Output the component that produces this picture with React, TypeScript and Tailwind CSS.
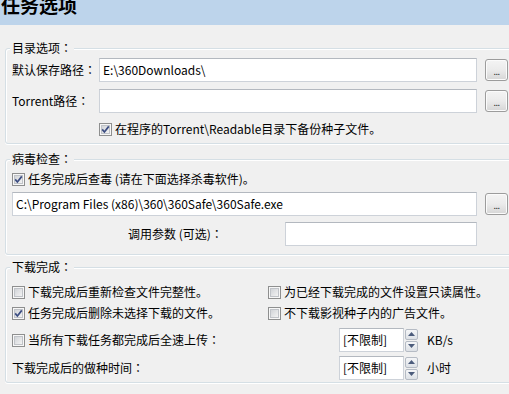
import React from "react";

const F = "font-['Noto_Sans_CJK_SC','Noto_Sans',sans-serif]";

function C() {
  return <span className="font-['Noto_Sans_CJK_JP','Noto_Sans_CJK_TC',sans-serif]">：</span>;
}

function Check({ checked }: { checked?: boolean }) {
  return (
    <svg width="13" height="13" viewBox="0 0 13 13" className="shrink-0">
      <defs>
        <linearGradient id="cbg" x1="0" y1="0" x2="1" y2="1">
          <stop offset="0" stopColor="#cfd2d6" />
          <stop offset="1" stopColor="#f5f5f5" />
        </linearGradient>
      </defs>
      <rect x="0.5" y="0.5" width="12" height="12" fill="#f7f7f7" stroke="#8e8f8f" />
      <rect x="2.5" y="2.5" width="8" height="8" fill="url(#cbg)" stroke="#c0c3c8" />
      {checked && (
        <path d="M3.2 6.4 L5.4 9 L9.8 3.4" fill="none" stroke="#3b4d82" strokeWidth="1.7" />
      )}
    </svg>
  );
}

function Input({ value, className }: { value?: string; className: string }) {
  return (
    <div
      className={`h-[24px] shrink-0 border border-[#cdd2d9] border-t-[#b3b8bf] bg-white pl-[3px] text-[12px] leading-[22px] text-black whitespace-nowrap overflow-hidden ${className}`}
    >
      {value}
    </div>
  );
}

function Dots() {
  return (
    <div className="ml-[8px] mt-[1px] flex h-[22px] w-[23px] shrink-0 items-center justify-center rounded-[3px] border border-[#9c9c9c] bg-gradient-to-b from-[#f4f4f4] via-[#ebebeb] to-[#d6d6d6] shadow-[inset_0_0_0_1px_#fbfbfb]">
      <span className="text-[9px] leading-none text-[#333] mt-[3px] tracking-[-0.5px]">...</span>
    </div>
  );
}

function SpinBtn({ up }: { up?: boolean }) {
  return (
    <div className="flex h-[11px] w-[13px] items-center justify-center rounded-[2px] border border-[#b5bbc4] bg-gradient-to-b from-[#f5f6f8] to-[#dde1e6]">
      <svg width="7" height="4" viewBox="0 0 7 4">
        {up ? <path d="M0 4 L3.5 0 L7 4 Z" fill="#4c5c7c" /> : <path d="M0 0 L3.5 4 L7 0 Z" fill="#4c5c7c" />}
      </svg>
    </div>
  );
}

function Spin({ unit }: { unit: string }) {
  return (
    <div className="flex items-center">
      <Input value="[不限制]" className="w-[65px] h-[24px]" />
      <div className="ml-[1px] flex flex-col gap-[1px]">
        <SpinBtn up />
        <SpinBtn />
      </div>
      <span className="ml-[9px] text-[12px]">{unit}</span>
    </div>
  );
}

function Group({
  title,
  className,
  children,
}: {
  title: string;
  className: string;
  children: React.ReactNode;
}) {
  return (
    <div
      className={`relative ml-[5px] w-[520px] rounded-[3px] border border-[#d5dfe5] shadow-[inset_1px_1px_0_#ffffff,0_1px_0_#ffffff] pl-[6px] ${className}`}
    >
      <div className="absolute left-[4px] top-[-10px] bg-[#f0f0f0] px-[2px] text-[12px] leading-[17px]">
        {title}
        <C />
      </div>
      {children}
    </div>
  );
}

function CheckRow({ checked, label, colon, className = "" }: { checked?: boolean; label: string; colon?: boolean; className?: string }) {
  return (
    <div className={`flex h-[16px] items-center gap-[3px] text-[12px] whitespace-nowrap ${className}`}>
      <Check checked={checked} />
      <span>
        {label}
        {colon && <C />}
      </span>
    </div>
  );
}

export default function App() {
  return (
    <div className={`h-[394px] w-[509px] overflow-hidden bg-[#f0f0f0] text-black ${F}`}>
      <div className="h-[25px] overflow-hidden bg-[#bdd4eb]">
        <div className="mt-[-5px] pl-[1px] text-[19px] font-bold leading-[20px] text-black">任务选项</div>
      </div>

      <Group title="目录选项" className="mt-[23px] pt-[9px] pb-[6px]">
        <div className="flex items-start">
          <div className="w-[87px] shrink-0 text-[12px] leading-[24px]">
            默认保存路径<C />
          </div>
          <Input value="E:\360Downloads\" className="w-[378px]" />
          <Dots />
        </div>
        <div className="mt-[7px] flex items-start">
          <div className="w-[87px] shrink-0 text-[12px] leading-[24px]">
            Torrent路径<C />
          </div>
          <Input className="w-[378px]" />
          <Dots />
        </div>
        <CheckRow checked label="在程序的Torrent\Readable目录下备份种子文件。" className="mt-[8px] ml-[87px]" />
      </Group>

      <Group title="病毒检查" className="mt-[15px] pt-[11px] pb-[8px]">
        <CheckRow checked label="任务完成后查毒 (请在下面选择杀毒软件)。" />
        <div className="mt-[5px] flex items-start">
          <Input value="C:\Program Files (x86)\360\360Safe\360Safe.exe" className="w-[465px]" />
          <Dots />
        </div>
        <div className="mt-[6px] flex items-center">
          <div className="w-[273px] pl-[116px] text-[12px] leading-[24px] whitespace-nowrap">
            调用参数 (可选)<C />
          </div>
          <Input className="w-[192px]" />
        </div>
      </Group>

      <Group title="下载完成" className="mt-[12px] pt-[16px] pb-[2px]">
        <div className="flex">
          <CheckRow label="下载完成后重新检查文件完整性。" className="w-[256px]" />
          <CheckRow label="为已经下载完成的文件设置只读属性。" />
        </div>
        <div className="mt-[5px] flex">
          <CheckRow checked label="任务完成后删除未选择下载的文件。" className="w-[256px]" />
          <CheckRow label="不下载影视种子内的广告文件。" />
        </div>
        <div className="mt-[7px] flex items-center">
          <CheckRow label="当所有下载任务都完成后全速上传" colon className="w-[327px]" />
          <Spin unit="KB/s" />
        </div>
        <div className="mt-[4px] flex items-center">
          <div className="w-[327px] text-[12px]">
            下载完成后的做种时间<C />
          </div>
          <Spin unit="小时" />
        </div>
      </Group>
    </div>
  );
}
